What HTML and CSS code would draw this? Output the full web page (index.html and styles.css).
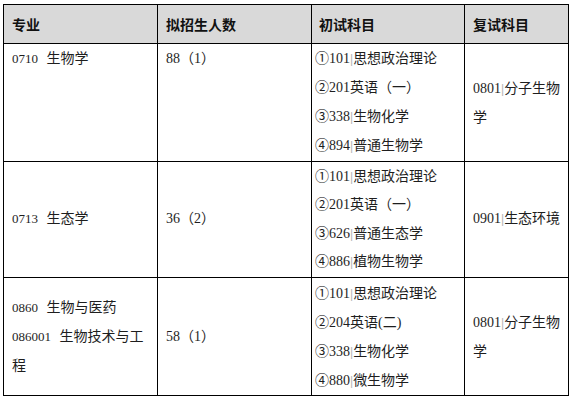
FILE: index.html
```html
<!DOCTYPE html>
<html lang="zh">
<head>
<meta charset="utf-8">
<link rel="stylesheet" href="styles.css">
</head>
<body>
<table class="plan">
  <colgroup>
    <col class="c1"><col class="c2"><col class="c3"><col class="c4">
  </colgroup>
  <thead>
    <tr class="r-head">
      <th>专业</th>
      <th>拟招生人数</th>
      <th class="h3">初试科目</th>
      <th>复试科目</th>
    </tr>
  </thead>
  <tbody>
    <tr class="r1">
      <td class="top"><span class="code">0710</span> 生物学</td>
      <td class="top num">88（1）</td>
      <td class="top subj">①101<span class="sep">|</span>思想政治理论<br>②201英语（一）<br>③338<span class="sep">|</span>生物化学<br>④894<span class="sep">|</span>普通生物学</td>
      <td class="mid re">0801<span class="sep">|</span>分子生物学</td>
    </tr>
    <tr class="r2">
      <td class="mid"><span class="code">0713</span> 生态学</td>
      <td class="mid num">36（2）</td>
      <td class="mid subj">①101<span class="sep">|</span>思想政治理论<br>②201英语（一）<br>③626<span class="sep">|</span>普通生态学<br>④886<span class="sep">|</span>植物生物学</td>
      <td class="mid re">0901<span class="sep">|</span>生态环境</td>
    </tr>
    <tr class="r3">
      <td class="mid"><span class="code">0860</span> 生物与医药<br><span class="code">086001</span> 生物技术与工程</td>
      <td class="mid num">58（1）</td>
      <td class="mid subj">①101<span class="sep">|</span>思想政治理论<br>②204英语(二)<br>③338<span class="sep">|</span>生物化学<br>④880<span class="sep">|</span>微生物学</td>
      <td class="mid re">0801<span class="sep">|</span>分子生物学</td>
    </tr>
  </tbody>
</table>
</body>
</html>
```

FILE: styles.css
```css
html, body {
  margin: 0;
  padding: 0;
  background: #ffffff;
}

body {
  font-family: "Liberation Serif", "Noto Sans CJK SC", serif;
  font-size: 14px;
  color: #1e1e1e;
}

.plan {
  border-collapse: collapse;
  table-layout: fixed;
  width: 565px;
  margin: 4px 0 0 3px;
}

.c1 { width: 154px; }
.c2 { width: 154px; }
.c3 { width: 153px; }
.c4 { width: 104px; }

.plan th,
.plan td {
  border: 1px solid #000;
  padding: 0 8px;
  line-height: 29px;
  text-align: left;
}

.plan th {
  background: #d9d9d9;
  font-family: "Noto Sans CJK SC", sans-serif;
  font-weight: bold;
  font-size: 14px;
  color: #111;
  vertical-align: middle;
}

.r-head { height: 39px; }
.r1 { height: 118px; }
.r2 { height: 116px; }
.r3 { height: 118px; }

.plan .r2 td { line-height: 28.5px; }

.top { vertical-align: top; }
.mid { vertical-align: middle; }

.plan td.subj { padding-left: 3px; padding-right: 2px; }
.plan th.h3 { padding-left: 7px; }
.plan td.re { padding-right: 4px; }

.code {
  font-size: 13px;
  line-height: 1;
  margin-right: 5px;
}

.sep {
  color: #b5b5b5;
  font-family: "Liberation Sans", sans-serif;
  font-size: 12px;
  line-height: 1;
}
```
